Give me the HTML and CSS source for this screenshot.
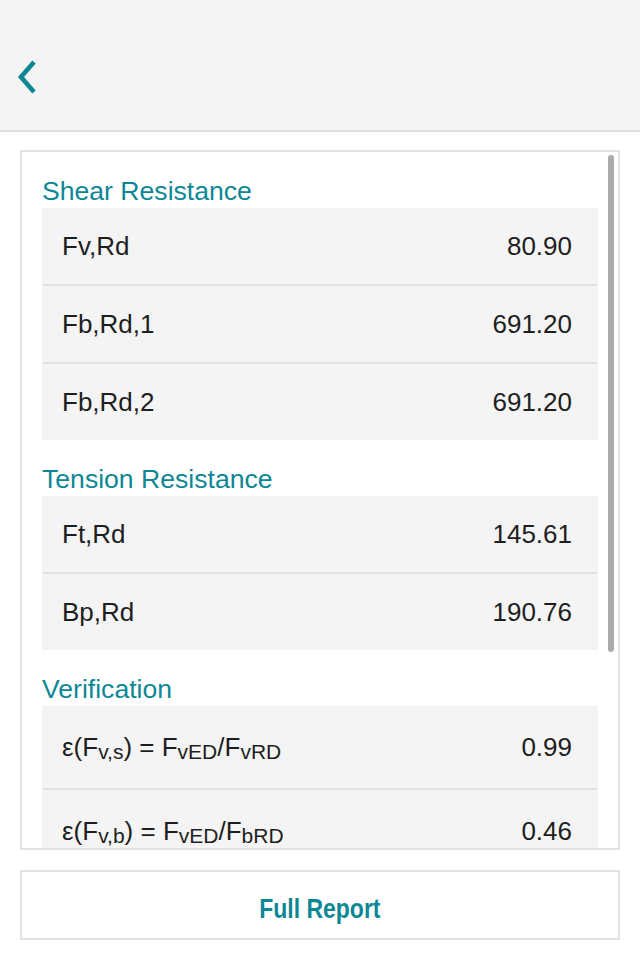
FILE: index.html
```html
<!DOCTYPE html>
<html lang="en">
<head>
  <meta charset="UTF-8">
  <meta name="viewport" content="width=device-width, initial-scale=1">
  <title>Bolt Results</title>
  <link rel="stylesheet" href="styles.css">
</head>
<body>
  <header class="topbar">
    <a href="#" class="back" aria-label="Back">
      <svg width="22" height="36" viewBox="0 0 22 36">
        <polyline points="18,3 5,18 18,33" fill="none" stroke="#0d8796" stroke-width="4.6" stroke-linejoin="miter"/>
      </svg>
    </a>
  </header>

  <main class="content">
    <section class="panel">
      <div class="panel-scroll">
        <h2 class="group-title">Shear Resistance</h2>
        <ul class="rows">
          <li class="row"><span>Fv,Rd</span><span class="val">80.90</span></li>
          <li class="row"><span>Fb,Rd,1</span><span class="val">691.20</span></li>
          <li class="row"><span>Fb,Rd,2</span><span class="val">691.20</span></li>
        </ul>

        <h2 class="group-title">Tension Resistance</h2>
        <ul class="rows">
          <li class="row"><span>Ft,Rd</span><span class="val">145.61</span></li>
          <li class="row"><span>Bp,Rd</span><span class="val">190.76</span></li>
        </ul>

        <h2 class="group-title">Verification</h2>
        <ul class="rows">
          <li class="row row-tall"><span>ε(F<sub>v,s</sub>) = F<sub>vED</sub>/F<sub>vRD</sub></span><span class="val">0.99</span></li>
          <li class="row row-tall"><span>ε(F<sub>v,b</sub>) = F<sub>vED</sub>/F<sub>bRD</sub></span><span class="val">0.46</span></li>
        </ul>
      </div>
      <div class="scrollbar"></div>
    </section>

    <button class="report-btn"><span>Full Report</span></button>
  </main>
</body>
</html>
```

FILE: styles.css
```css
html, body {
  margin: 0;
  padding: 0;
  background-color: #ffffff;
  color: #1e1e1e;
  font-family: 'Liberation Sans', Arial, sans-serif;
}

.topbar {
  height: 130px;
  background-color: #f4f4f4;
  border-bottom: 2px solid #e0e0e0;
  display: flex;
  align-items: center;
}

.back {
  display: block;
  margin: 24px 0 0 16px;
  line-height: 0;
}

.content {
  padding: 18px 20px 0 20px;
}

.panel {
  position: relative;
  height: 696px;
  border: 2px solid #e2e2e2;
  overflow: hidden;
}

.panel-scroll {
  padding: 0 20px;
}

.group-title {
  margin: 0;
  padding: 24px 0 2px 0;
  font-size: 26.6px;
  line-height: 30px;
  font-weight: normal;
  color: #0d8796;
}

.rows {
  list-style: none;
  margin: 0;
  padding: 0;
}

.row {
  display: flex;
  justify-content: space-between;
  align-items: center;
  height: 76px;
  padding: 0 26px 0 20px;
  background-color: #f4f4f4;
  border-bottom: 2px solid #e2e2e2;
  font-size: 26px;
  line-height: 30px;
}

.row:last-child {
  border-bottom: none;
}

.row-tall {
  height: 82px;
}

.row sub {
  font-size: 21px;
  line-height: 0;
  vertical-align: -3px;
}

.scrollbar {
  position: absolute;
  top: 3px;
  right: 4px;
  width: 6px;
  height: 497px;
  border-radius: 3px;
  background-color: #ababab;
}

.report-btn {
  display: block;
  width: 100%;
  height: 70px;
  margin-top: 20px;
  padding: 8px 0 0 0;
  background-color: #ffffff;
  border: 2px solid #e2e2e2;
  font-family: 'Liberation Sans', Arial, sans-serif;
  font-size: 28px;
  font-weight: bold;
  color: #0d8796;
  cursor: pointer;
}

.report-btn span {
  display: inline-block;
  transform: scaleX(0.82);
}
```
